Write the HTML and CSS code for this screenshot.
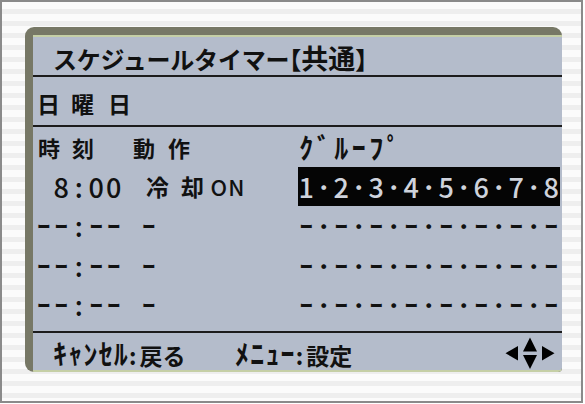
FILE: index.html
```html
<!DOCTYPE html>
<html lang="ja">
<head>
<meta charset="utf-8">
<title>スケジュールタイマー</title>
<link rel="stylesheet" href="styles.css">
</head>
<body>
<div class="device">
  <div class="frame">
    <div class="lcd">
      <div class="title">スケジュールタイマー<span class="br">【</span><span class="kj">共通</span><span class="br">】</span></div>
      <div class="day"><span class="d1">日</span><span class="d2">曜</span><span class="d3">日</span></div>
      <div class="table">
        <div class="row head">
          <span class="h1">時</span><span class="h2">刻</span><span class="h3">動</span><span class="h4">作</span>
          <span class="c hk">ｸ</span><span class="c hk">ﾞ</span><span class="c hk">ﾙ</span><span class="c hk">ｰ</span><span class="c hk">ﾌ</span><span class="c hk">ﾟ</span>
        </div>
        <div class="row">
          <div class="time"><span class="c"></span><span class="c">8</span><span class="c">:</span><span class="c">0</span><span class="c">0</span><span class="c"></span></div>
          <div class="act"><span class="k">冷</span><span class="k">却</span><span class="c sm">O</span><span class="c sm">N</span></div>
          <div class="grp on"><span class="c">1</span><span class="c">･</span><span class="c">2</span><span class="c">･</span><span class="c">3</span><span class="c">･</span><span class="c">4</span><span class="c">･</span><span class="c">5</span><span class="c">･</span><span class="c">6</span><span class="c">･</span><span class="c">7</span><span class="c">･</span><span class="c">8</span></div>
        </div>
        <div class="row">
          <div class="time"><span class="c">ｰ</span><span class="c">ｰ</span><span class="c">:</span><span class="c">ｰ</span><span class="c">ｰ</span><span class="c"></span></div>
          <div class="act"><span class="c">ｰ</span></div>
          <div class="grp"><span class="c">ｰ</span><span class="c">･</span><span class="c">ｰ</span><span class="c">･</span><span class="c">ｰ</span><span class="c">･</span><span class="c">ｰ</span><span class="c">･</span><span class="c">ｰ</span><span class="c">･</span><span class="c">ｰ</span><span class="c">･</span><span class="c">ｰ</span><span class="c">･</span><span class="c">ｰ</span></div>
        </div>
        <div class="row">
          <div class="time"><span class="c">ｰ</span><span class="c">ｰ</span><span class="c">:</span><span class="c">ｰ</span><span class="c">ｰ</span><span class="c"></span></div>
          <div class="act"><span class="c">ｰ</span></div>
          <div class="grp"><span class="c">ｰ</span><span class="c">･</span><span class="c">ｰ</span><span class="c">･</span><span class="c">ｰ</span><span class="c">･</span><span class="c">ｰ</span><span class="c">･</span><span class="c">ｰ</span><span class="c">･</span><span class="c">ｰ</span><span class="c">･</span><span class="c">ｰ</span><span class="c">･</span><span class="c">ｰ</span></div>
        </div>
        <div class="row">
          <div class="time"><span class="c">ｰ</span><span class="c">ｰ</span><span class="c">:</span><span class="c">ｰ</span><span class="c">ｰ</span><span class="c"></span></div>
          <div class="act"><span class="c">ｰ</span></div>
          <div class="grp"><span class="c">ｰ</span><span class="c">･</span><span class="c">ｰ</span><span class="c">･</span><span class="c">ｰ</span><span class="c">･</span><span class="c">ｰ</span><span class="c">･</span><span class="c">ｰ</span><span class="c">･</span><span class="c">ｰ</span><span class="c">･</span><span class="c">ｰ</span><span class="c">･</span><span class="c">ｰ</span></div>
        </div>
      </div>
      <div class="foot">
        <span class="f1"><span class="hw">ｷｬﾝｾﾙ</span><span class="fc">:</span>戻る</span>
        <span class="f2"><span class="hw">ﾒﾆｭｰ</span><span class="fc">:</span>設定</span>
        <svg class="arrows" width="50" height="32" viewBox="505 337 50 32">
          <polygon points="518,346 518,360.5 505.5,353.2" fill="#000"/>
          <polygon points="523,351.5 537,351.5 530,337.5" fill="#000"/>
          <polygon points="523,355 537,355 530,369" fill="#000"/>
          <polygon points="542,346 542,360.5 554.5,353.2" fill="#000"/>
        </svg>
      </div>
    </div>
  </div>
</div>
</body>
</html>
```
FILE: styles.css
```css
html, body {
  margin: 0;
  padding: 0;
  background: #ffffff;
}
.device {
  box-sizing: border-box;
  width: 583px;
  height: 403px;
  border: 2px solid #8a8a8a;
  background: repeating-linear-gradient(180deg, #fbfbfb 0px, #fbfbfb 7px, #eeeeee 7px, #eeeeee 12px);
  padding: 25px 0 0 23px;
  font-family: "Noto Sans CJK JP", "Noto Sans", sans-serif;
  color: #111;
}
.frame {
  width: 537px;
  height: 345px;
  box-sizing: border-box;
  background: #777866;
  border-radius: 9px 9px 4px 9px;
  padding: 8px 0 0 8px;
  overflow: hidden;
}
.lcd {
  width: 529px;
  height: 337px;
  box-sizing: border-box;
  background: #b4bccb;
  border-top: 2px solid #c5cfa6;
  border-bottom: 2px solid #c5cfa6;
  border-radius: 0 0 4px 0;
  display: flex;
  flex-direction: column;
}
.title {
  height: 40px;
  box-sizing: border-box;
  border-bottom: 2px solid #1c1c1c;
  padding: 4px 0 0 20px;
  font-size: 24px;
  line-height: 34px;
  font-weight: 700;
  letter-spacing: -0.2px;
  white-space: nowrap;
  flex-shrink: 0;
}
.title .br {
  font-feature-settings: "halt" 1;
  letter-spacing: 0;
}
.title .kj {
  font-size: 27px;
  letter-spacing: 0;
}
.day {
  height: 50px;
  box-sizing: border-box;
  border-bottom: 2px solid #1c1c1c;
  display: flex;
  align-items: center;
  padding: 4px 0 0 4px;
  font-size: 23px;
  line-height: 1;
  font-weight: 700;
  flex-shrink: 0;
}
.day span { display: block; }
.d1 { width: 34px; }
.d2 { width: 37px; }
.table {
  height: 206px;
  box-sizing: border-box;
  border-bottom: 2px solid #1c1c1c;
  padding-bottom: 6.5px;
  flex-shrink: 0;
}
.row {
  height: 39.5px;
  display: flex;
  align-items: center;
  padding-left: 2px;
  font-size: 27px;
  line-height: 1;
  font-weight: 500;
}
.head { font-size: 22px; font-weight: 700; }
.head .h1 { margin-left: 3px; width: 34px; }
.head .h2 { width: 61px; }
.head .h3 { width: 35px; }
.head .h4 { width: 129.5px; }
.c {
  display: block;
  width: 17.5px;
  flex-shrink: 0;
  text-align: center;
}
.c.sm { font-size: 22px; }
.hk { font-size: 28px; font-weight: 700; }
.k {
  display: block;
  width: 35px;
  flex-shrink: 0;
  text-align: center;
  font-size: 23px;
  font-weight: 700;
}
.time, .act, .grp {
  display: flex;
  height: 100%;
  align-items: center;
}
.time { width: 105px; }
.act { width: 157.5px; }
.grp { width: 262.5px; }
.grp.on {
  background: #050505;
  color: #cfd3dc;
}
.foot {
  flex: 1;
  display: flex;
  align-items: center;
  padding: 3px 0 0 20px;
  font-size: 23px;
  line-height: 1;
  font-weight: 700;
  position: relative;
}
.f1, .f2 { display: flex; align-items: baseline; }
.f1 { width: 182px; }
.hw { font-size: 28px; letter-spacing: 1.2px; }
.fc { margin: 0 3px 0 0; }
.arrows {
  position: absolute;
  left: 472px;
  top: 4px;
}
```
